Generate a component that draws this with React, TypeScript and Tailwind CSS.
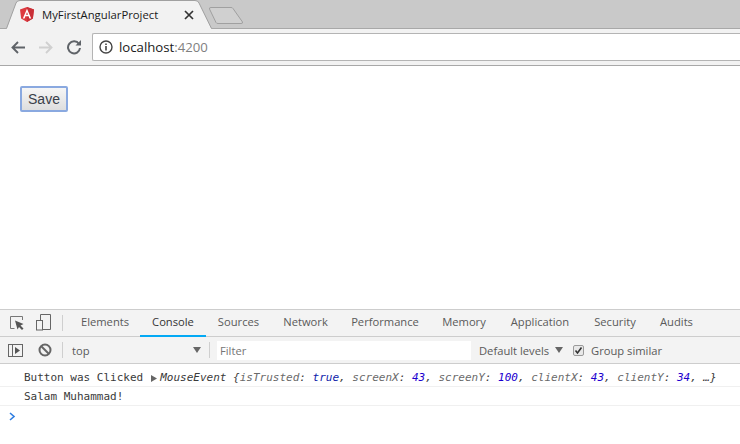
import React from "react";

const ui = { fontFamily: '"Open Sans", "Noto Sans", sans-serif' };
const mono = { fontFamily: '"DejaVu Sans Mono", monospace' };

const tabs = ["Elements", "Console", "Sources", "Network", "Performance", "Memory", "Application", "Security", "Audits"];
const tabWidths = [70, 66, 65, 69, 90, 68, 84, 66, 57];

function K({ children }: { children: React.ReactNode }) {
  return <span className="text-[#6a6a6a]">{children}</span>;
}
function N({ children }: { children: React.ReactNode }) {
  return <span className="text-[#1c00cf]">{children}</span>;
}

export default function App() {
  return (
    <div className="w-[740px] h-[444px] overflow-hidden bg-white flex flex-col" style={ui}>
      {/* tab strip */}
      <div className="relative h-[29px] shrink-0 bg-[#c9c9c9] border-b border-[#a8a8a8]">
        <svg className="absolute left-0 top-0" width="250" height="29" viewBox="0 0 250 29">
          <path d="M6.5 29 L16 3 Q17 0.5 20 0.5 H195 Q198 0.5 199 3 L211.5 29 Z" fill="#f2f2f2" />
          <path d="M6.5 28.5 L16 3 Q17 0.5 20 0.5 H195 Q198 0.5 199 3 L211.5 28.5" fill="none" stroke="#a0a0a0" />
          <path d="M209.5 9 Q209 7.5 211 7.5 H231 Q232.5 7.5 233 8.5 L242.5 22 Q243 23.5 241 23.5 H218 Q216.5 23.5 216 22.5 Z" fill="#d0d0d0" stroke="#a0a0a0" />
        </svg>
        <div className="absolute left-[20px] top-[7px]">
          <svg width="14" height="15" viewBox="0 0 14 15" className="block">
            <path d="M7 0 L14 2.4 L12.9 11.6 L7 15 L1.1 11.6 L0 2.4 Z" fill="#dd3a3f" />
            <path d="M7 0 L14 2.4 L12.9 11.6 L7 15 Z" fill="#c93038" />
            <path d="M7 1.8 L2.8 11.4 H4.6 L5.4 9.3 H8.6 L9.4 11.4 H11.2 Z M6 7.8 L7 5.2 L8 7.8 Z" fill="#fff" />
          </svg>
        </div>
        <span className="absolute left-[42px] top-[6px] text-[11.3px] leading-[17px] text-[#1a1a1a]">MyFirstAngularProject</span>
        <svg className="absolute left-[184px] top-[10px]" width="10" height="10" viewBox="0 0 10 10">
          <path d="M1 1 L9 9 M9 1 L1 9" stroke="#333" strokeWidth="1.7" />
        </svg>
      </div>

      {/* address toolbar */}
      <div className="h-[37px] shrink-0 bg-[#f2f2f2] border-b border-[#a8a8a8] flex items-center pl-[11px]">
        <svg width="14" height="13" viewBox="0 0 14 13" className="shrink-0">
          <path d="M14 6.5 H2 M7 1 L1.5 6.5 L7 12" fill="none" stroke="#5f6368" strokeWidth="1.9" />
        </svg>
        <svg width="14" height="13" viewBox="0 0 14 13" className="shrink-0 ml-[14px]">
          <path d="M0 6.5 H12 M7 1 L12.5 6.5 L7 12" fill="none" stroke="#d0d0d0" strokeWidth="1.9" />
        </svg>
        <svg width="16" height="16" viewBox="0 0 16 16" className="shrink-0 ml-[13px]">
          <path d="M13 5 A6 6 0 1 0 14 9" fill="none" stroke="#5f6368" strokeWidth="2" />
          <path d="M15 1 V6.5 H9.5 Z" fill="#5f6368" />
        </svg>
        <div className="ml-[10px] flex-1 h-[28px] bg-white border border-[#b4b4b4] border-r-0 rounded-l-[2px] flex items-center pl-[6px]">
          <svg width="14" height="14" viewBox="0 0 14 14" className="shrink-0">
            <circle cx="7" cy="7" r="6" fill="none" stroke="#444" strokeWidth="1.4" />
            <path d="M7 6 V10.5 M7 3.4 V5" stroke="#444" strokeWidth="1.6" />
          </svg>
          <span className="ml-[6px] text-[13.2px] leading-[20px] text-[#1a1a1a]">localhost<span className="text-[#808080]">:4200</span></span>
        </div>
      </div>

      {/* page */}
      <div className="h-[243px] shrink-0 bg-white pl-[20px] pt-[20px]">
        <button
          className="w-[48px] h-[26px] rounded-[2px] border-2 border-[#8aa9e0] bg-gradient-to-b from-[#f6f6f6] to-[#dedede] text-[14px] text-[#3a3f4a] flex items-center justify-center"
          style={{ fontFamily: '"Liberation Sans", sans-serif' }}
        >
          Save
        </button>
      </div>

      {/* devtools tab bar */}
      <div className="h-[28px] shrink-0 bg-[#f3f3f3] border-t border-b border-[#cdcdcd] flex items-stretch text-[11.2px] text-[#5a5a5a]">
        <div className="w-[70px] shrink-0 relative">
          <svg width="14" height="14" viewBox="0 0 14 14" className="absolute left-[10px] top-[6px]">
            <path d="M4.5 12.5 H0.5 V0.5 H12.5 V4" fill="none" stroke="#777" />
            <path d="M5 4.5 L13.5 8 L10.5 9.5 L13.5 12.5 L12 14 L9 11 L7.5 13.5 Z" fill="#555" />
          </svg>
          <svg width="16" height="17" viewBox="0 0 16 17" className="absolute left-[36px] top-[4px]">
            <path d="M4.5 6 V0.5 H14.5 V15.5 H7" fill="none" stroke="#666" />
            <rect x="0.5" y="6.5" width="6" height="9.5" fill="none" stroke="#666" />
          </svg>
          <div className="absolute left-[62px] top-[5px] w-px h-[16px] bg-[#cfcfcf]" />
        </div>
        {tabs.map((t, i) => (
          <div
            key={t}
            style={{ width: tabWidths[i] }}
            className={
              "shrink-0 flex items-center justify-center border-b-2 -mb-px " +
              (t === "Console" ? "border-[#03a9f4] text-[#333]" : "border-transparent")
            }
          >
            {t}
          </div>
        ))}
      </div>

      {/* console toolbar */}
      <div className="h-[27px] shrink-0 bg-[#f3f3f3] border-b border-[#cdcdcd] flex items-center text-[11.2px] text-[#5a5a5a] relative">
        <svg width="15" height="13" viewBox="0 0 15 13" className="shrink-0 ml-[8px]">
          <rect x="0.5" y="0.5" width="14" height="12" fill="none" stroke="#666" />
          <path d="M4.5 0.5 V12.5" stroke="#666" />
          <path d="M7 3 L12 6.5 L7 10 Z" fill="#555" />
        </svg>
        <svg width="14" height="14" viewBox="0 0 14 14" className="shrink-0 ml-[15px]">
          <circle cx="7" cy="7" r="5.5" fill="none" stroke="#666" strokeWidth="2" />
          <path d="M3 3 L11 11" stroke="#666" strokeWidth="2" />
        </svg>
        <div className="w-px h-[16px] bg-[#cfcfcf] ml-[10px] shrink-0" />
        <span className="ml-[9px] w-[121px] shrink-0 pt-[2px]">top</span>
        <svg width="8" height="6" viewBox="0 0 8 6" className="shrink-0">
          <path d="M0 0 H8 L4 6 Z" fill="#666" />
        </svg>
        <div className="w-px h-[16px] bg-[#cfcfcf] ml-[8px] shrink-0" />
        <div className="ml-[7px] w-[254px] h-[19px] shrink-0 bg-white flex items-center pl-[3px] pt-[2px] text-[#757575]">Filter</div>
        <span className="ml-[8px] w-[72px] shrink-0 pt-[2px] whitespace-nowrap">Default levels</span>
        <svg width="8" height="6" viewBox="0 0 8 6" className="ml-[4px] shrink-0">
          <path d="M0 0 H8 L4 6 Z" fill="#666" />
        </svg>
        <div className="ml-[10px] w-[11px] h-[11px] shrink-0 rounded-[2px] bg-[#e8e8e8] border border-[#9a9a9a] flex items-center justify-center">
          <svg width="9" height="9" viewBox="0 0 9 9">
            <path d="M1.5 4.5 L3.5 7 L7.5 1.5" fill="none" stroke="#333" strokeWidth="1.6" />
          </svg>
        </div>
        <span className="ml-[7px] shrink-0 pt-[2px]">Group similar</span>
      </div>

      {/* console rows */}
      <div className="h-[23px] shrink-0 border-b border-[#f0f0f0] flex items-center pl-[24px] pt-[7px] text-[11px] text-[#3a3a3a] whitespace-pre" style={mono}>
        <span>Button was Clicked</span>
        <svg width="6" height="7" viewBox="0 0 6 7" className="ml-[8px] mr-[3px] shrink-0">
          <path d="M0 0 L6 3.5 L0 7 Z" fill="#666" />
        </svg>
        <span className="italic text-[#3a3a3a]">
          MouseEvent {"{"}
          <K>isTrusted</K>: <span className="text-[#0d22aa]">true</span>, <K>screenX</K>: <N>43</N>, <K>screenY</K>: <N>100</N>, <K>clientX</K>: <N>43</N>, <K>clientY</K>: <N>34</N>, …{"}"}
        </span>
      </div>
      <div className="h-[19px] shrink-0 border-b border-[#f0f0f0] flex items-center pl-[24px] pt-[3px] text-[11px] text-[#3a3a3a]" style={mono}>
        Salam Muhammad!
      </div>
      <div className="h-[20px] shrink-0 flex items-center pl-[9px]">
        <svg width="7" height="9" viewBox="0 0 7 9">
          <path d="M1 1 L5 4.5 L1 8" fill="none" stroke="#2f7de1" strokeWidth="1.6" />
        </svg>
      </div>
      <div className="flex-1 bg-white" />
    </div>
  );
}
